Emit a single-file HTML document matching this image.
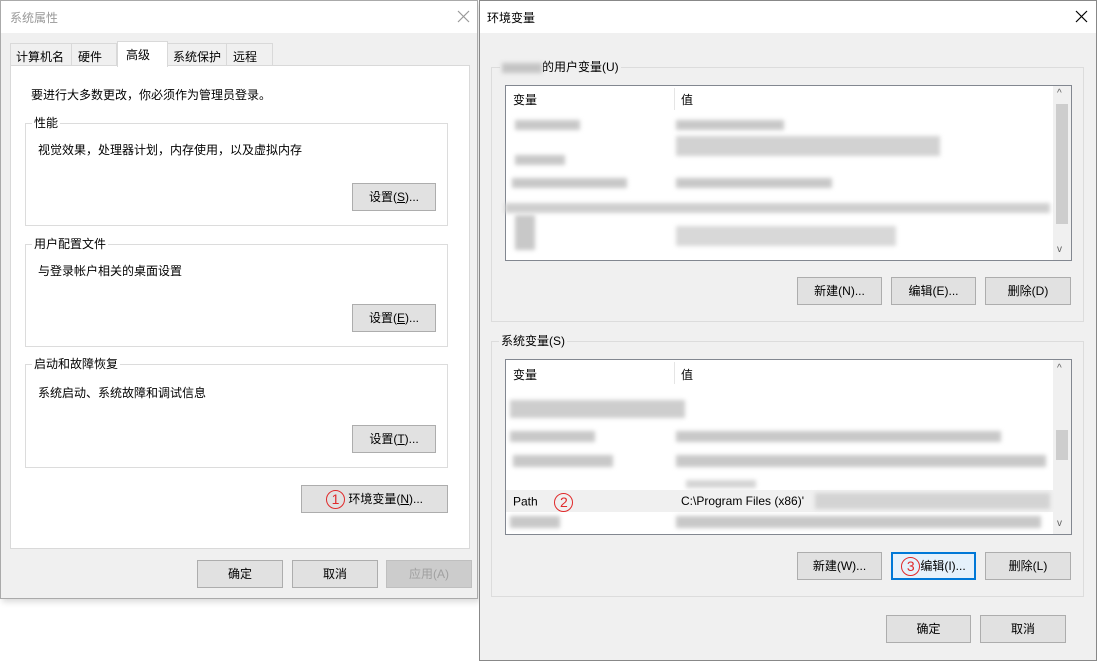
<!DOCTYPE html>
<html><head><meta charset="utf-8">
<style>
*{margin:0;padding:0;box-sizing:border-box}
body{width:1098px;height:661px;background:#fff;position:relative;overflow:hidden;font-family:"Liberation Sans","Noto Sans CJK SC",sans-serif;font-size:12px;color:#000}
.a{position:absolute}
.btn{position:absolute;background:#e1e1e1;border:1px solid #adadad;text-align:center;font-size:12px;line-height:26px;height:28px}
.grp{position:absolute;border:1px solid #dcdcdc}
.lbl{position:absolute;background:inherit;padding:0 2px;font-size:12px;line-height:14px}
.bl{position:absolute;background:#c8c8c8;filter:blur(2px)}
.circ{display:inline-block;width:19px;height:19px;border:1px solid #e0292a;border-radius:50%;color:#e0292a;font-size:14px;line-height:17px;text-align:center;vertical-align:middle}
</style></head><body>
<!-- left dialog -->
<div class="a" style="left:0;top:0;width:478px;height:599px;background:#f0f0f0;border:1px solid #aaa;box-shadow:2px 3px 6px rgba(0,0,0,.15)"></div>
<div class="a" style="left:1px;top:1px;width:476px;height:32px;background:#fff"></div>
<div class="a" style="left:10px;top:9px;color:#999;font-size:12px">系统属性</div>
<svg class="a" style="left:457px;top:10px" width="13" height="13"><path d="M1 1L12 12M12 1L1 12" stroke="#999" stroke-width="1.2"/></svg>
<div class="a" style="left:10px;top:43px;width:62px;height:23px;border:1px solid #d9d9d9;background:#f0f0f0;padding:4px 5px;font-size:12px">计算机名</div>
<div class="a" style="left:71px;top:43px;width:46px;height:23px;border:1px solid #d9d9d9;background:#f0f0f0;padding:4px 6px">硬件</div>
<div class="a" style="left:167px;top:43px;width:60px;height:23px;border:1px solid #d9d9d9;background:#f0f0f0;padding:4px 5px">系统保护</div>
<div class="a" style="left:226px;top:43px;width:47px;height:23px;border:1px solid #d9d9d9;background:#f0f0f0;padding:4px 6px">远程</div>
<div class="a" style="left:10px;top:65px;width:460px;height:484px;background:#fff;border:1px solid #d9d9d9"></div>
<div class="a" style="left:117px;top:41px;width:51px;height:26px;background:#fff;border:1px solid #d9d9d9;border-bottom:none;padding:4px 8px">高级</div>
<div class="a" style="left:31px;top:86px">要进行大多数更改，你必须作为管理员登录。</div>
<div class="grp" style="left:25px;top:123px;width:423px;height:103px;background:#fff"></div>
<div class="lbl" style="left:32px;top:116px;background:#fff">性能</div>
<div class="a" style="left:38px;top:141px">视觉效果，处理器计划，内存使用，以及虚拟内存</div>
<div class="btn" style="left:352px;top:183px;width:84px">设置(<u>S</u>)...</div>
<div class="grp" style="left:25px;top:244px;width:423px;height:103px;background:#fff"></div>
<div class="lbl" style="left:32px;top:237px;background:#fff">用户配置文件</div>
<div class="a" style="left:38px;top:262px">与登录帐户相关的桌面设置</div>
<div class="btn" style="left:352px;top:304px;width:84px">设置(<u>E</u>)...</div>
<div class="grp" style="left:25px;top:364px;width:423px;height:104px;background:#fff"></div>
<div class="lbl" style="left:32px;top:357px;background:#fff">启动和故障恢复</div>
<div class="a" style="left:38px;top:384px">系统启动、系统故障和调试信息</div>
<div class="btn" style="left:352px;top:425px;width:84px">设置(<u>T</u>)...</div>
<div class="btn" style="left:301px;top:485px;width:147px"><span class="circ">1</span> 环境变量(<u>N</u>)...</div>
<div class="btn" style="left:197px;top:560px;width:86px">确定</div>
<div class="btn" style="left:292px;top:560px;width:86px">取消</div>
<div class="btn" style="left:386px;top:560px;width:86px;color:#a0a0a0;background:#ccc;border-color:#bfbfbf">应用(A)</div>
<!-- right dialog -->
<div class="a" style="left:479px;top:0;width:618px;height:661px;background:#f0f0f0;border:1px solid #888"></div>
<div class="a" style="left:480px;top:1px;width:616px;height:32px;background:#fff"></div>
<div class="a" style="left:487px;top:9px">环境变量</div>
<svg class="a" style="left:1075px;top:10px" width="13" height="13"><path d="M1 1L12 12M12 1L1 12" stroke="#000" stroke-width="1.2"/></svg>
<div class="grp" style="left:491px;top:67px;width:593px;height:255px"></div>
<div class="lbl" style="left:500px;top:60px;background:#f0f0f0"><span style="display:inline-block;width:40px;height:10px;background:#c4c4c4;filter:blur(2px);vertical-align:middle"></span>的用户变量(U)</div>
<div class="a" style="left:505px;top:85px;width:567px;height:176px;background:#fff;border:1px solid #828790"></div>
<div class="a" style="left:674px;top:88px;width:1px;height:22px;background:#e5e5e5"></div>
<div class="a" style="left:513px;top:91px">变量</div>
<div class="a" style="left:681px;top:91px">值</div>
<div class="a" style="left:1053px;top:86px;width:18px;height:174px;background:#f0f0f0"></div>
<div class="a" style="left:1056px;top:104px;width:12px;height:120px;background:#cdcdcd"></div>
<div class="a" style="left:1057px;top:88px;font-size:10px;color:#606060">^</div>
<div class="a" style="left:1057px;top:244px;font-size:10px;color:#606060">v</div>
<div class="bl" style="left:515px;top:120px;width:65px;height:10px"></div>
<div class="bl" style="left:676px;top:120px;width:108px;height:10px"></div>
<div class="bl" style="left:676px;top:136px;width:264px;height:20px;background:#d2d2d2"></div>
<div class="bl" style="left:515px;top:155px;width:50px;height:10px"></div>
<div class="bl" style="left:676px;top:178px;width:156px;height:10px"></div>
<div class="bl" style="left:512px;top:178px;width:115px;height:10px"></div>
<div class="bl" style="left:505px;top:203px;width:545px;height:10px;background:#cfcfcf"></div>
<div class="bl" style="left:515px;top:215px;width:20px;height:35px"></div>
<div class="bl" style="left:676px;top:226px;width:220px;height:20px;background:#d8d8d8"></div>
<div class="btn" style="left:797px;top:277px;width:85px">新建(N)...</div>
<div class="btn" style="left:891px;top:277px;width:85px">编辑(E)...</div>
<div class="btn" style="left:985px;top:277px;width:86px">删除(D)</div>
<div class="grp" style="left:491px;top:341px;width:593px;height:256px"></div>
<div class="lbl" style="left:499px;top:334px;background:#f0f0f0">系统变量(S)</div>
<div class="a" style="left:505px;top:359px;width:567px;height:176px;background:#fff;border:1px solid #828790"></div>
<div class="a" style="left:674px;top:362px;width:1px;height:22px;background:#e5e5e5"></div>
<div class="a" style="left:513px;top:366px">变量</div>
<div class="a" style="left:681px;top:366px">值</div>
<div class="a" style="left:1053px;top:360px;width:18px;height:174px;background:#f0f0f0"></div>
<div class="a" style="left:1056px;top:430px;width:12px;height:30px;background:#cdcdcd"></div>
<div class="a" style="left:1057px;top:363px;font-size:10px;color:#606060">^</div>
<div class="a" style="left:1057px;top:518px;font-size:10px;color:#606060">v</div>
<div class="bl" style="left:510px;top:400px;width:175px;height:18px;background:#cdcdcd"></div>
<div class="bl" style="left:510px;top:431px;width:85px;height:11px"></div>
<div class="bl" style="left:676px;top:431px;width:325px;height:11px"></div>
<div class="bl" style="left:513px;top:455px;width:100px;height:12px"></div>
<div class="bl" style="left:676px;top:455px;width:370px;height:12px"></div>
<div class="bl" style="left:686px;top:480px;width:70px;height:8px;background:#d4d4d4"></div>
<div class="a" style="left:506px;top:490px;width:547px;height:22px;background:#f0f0f0"></div>
<div class="a" style="left:513px;top:493px;font-size:12px">Path&nbsp;&nbsp;&nbsp;&nbsp;&nbsp;<span class="circ">2</span></div>
<div class="a" style="left:681px;top:494px;font-size:12px">C:\Program Files (x86)'</div>
<div class="bl" style="left:815px;top:493px;width:235px;height:16px;background:#d3d3d3"></div>
<div class="bl" style="left:510px;top:516px;width:50px;height:12px"></div>
<div class="bl" style="left:676px;top:516px;width:365px;height:12px"></div>
<div class="btn" style="left:797px;top:552px;width:85px">新建(W)...</div>
<div class="btn" style="left:891px;top:552px;width:85px;border:2px solid #0078d7;background:#e5f1fb;line-height:24px"><span class="circ">3</span>编辑(I)...</div>
<div class="btn" style="left:985px;top:552px;width:86px">删除(L)</div>
<div class="btn" style="left:886px;top:615px;width:85px">确定</div>
<div class="btn" style="left:980px;top:615px;width:86px">取消</div>
</body></html>
